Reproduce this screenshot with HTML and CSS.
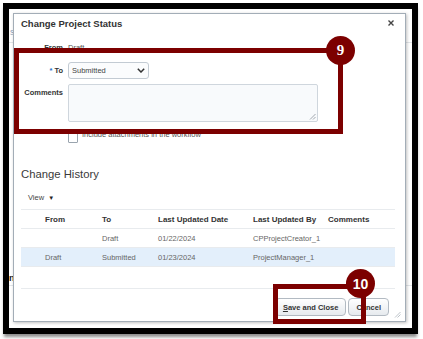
FILE: index.html
```html
<!DOCTYPE html>
<html lang="en">
<head>
    <meta charset="UTF-8">
    <meta name="viewport" content="width=device-width, initial-scale=1.0">
    <title>Change Project Status</title>
    <link rel="stylesheet" href="styles.css">
</head>
<body>
<div class="shot">
    <div class="frame">
        <div class="page">
            <div class="page-line"></div>
            <div class="page-mark">s</div>
            <div class="page-ns">ns</div>
            <div class="page-line page-line-low"></div>
        </div>

        <div class="dialog">
            <div class="dlg-head">
                <span class="dlg-title">Change Project Status</span>
                <svg class="dlg-close" width="6" height="6" viewBox="0 0 6 6">
                    <path d="M0.5 0.5 L5.5 5.5 M5.5 0.5 L0.5 5.5" stroke="#444" stroke-width="1.4"/>
                </svg>
            </div>

            <div class="form">
                <div class="row row-from">
                    <span class="lbl">From</span>
                    <span class="val">Draft</span>
                </div>
                <div class="row row-to">
                    <span class="lbl"><span class="req">*</span> To</span>
                    <div class="select">
                        <span>Submitted</span>
                        <svg width="8" height="5" viewBox="0 0 8 5">
                            <path d="M0.8 0.8 L4 4 L7.2 0.8" fill="none" stroke="#333" stroke-width="1.5"/>
                        </svg>
                    </div>
                </div>
                <div class="row row-comments">
                    <span class="lbl">Comments</span>
                    <div class="textarea">
                        <svg class="grip" width="7" height="7" viewBox="0 0 7 7">
                            <path d="M6.5 1 L1 6.5 M6.5 4 L4 6.5" stroke="#8a939c" stroke-width="0.8"/>
                        </svg>
                    </div>
                </div>
                <div class="row row-check">
                    <span class="lbl"></span>
                    <span class="check"></span>
                    <span class="check-text">Include attachments in the workflow</span>
                </div>
            </div>

            <h2 class="section">Change History</h2>
            <div class="toolbar">View <span class="caret">&#9660;</span></div>

            <div class="grid">
                <div class="grow ghead">
                    <span>From</span><span>To</span><span>Last Updated Date</span><span>Last Updated By</span><span>Comments</span>
                </div>
                <div class="grow">
                    <span></span><span>Draft</span><span>01/22/2024</span><span>CPProjectCreator_1</span><span></span>
                </div>
                <div class="grow selected">
                    <span>Draft</span><span>Submitted</span><span>01/23/2024</span><span>ProjectManager_1</span><span></span>
                </div>
            </div>

            <div class="footer">
                <button class="btn"><u>S</u>ave and Close</button>
                <button class="btn">Cancel</button>
            </div>

            <svg class="dlg-grip" width="7" height="7" viewBox="0 0 7 7">
                <path d="M6.5 1 L1 6.5 M6.5 3.5 L3.5 6.5" stroke="#b5bcc3" stroke-width="0.9"/>
            </svg>
        </div>
    </div>

    <div class="callout callout-9"><span class="badge badge-serif">9</span></div>
    <div class="callout callout-10"><span class="badge">10</span></div>
</div>
</body>
</html>
```

FILE: styles.css
```css
body {
    margin: 0;
    background: #fff;
    font-family: "Liberation Sans", Arial, sans-serif;
}

.shot {
    position: relative;
    width: 423px;
    height: 339px;
    padding: 3px 0 0 3px;
    box-sizing: border-box;
    overflow: hidden;
}

.frame {
    position: relative;
    width: 415px;
    height: 331px;
    box-sizing: border-box;
    border: 6px solid #000;
    background: #fff;
    box-shadow: 0 4px 3px -1px rgba(0, 0, 0, 0.45);
}

/* page behind the dialog */
.page {
    position: absolute;
    inset: 0;
    overflow: hidden;
}

.page-line {
    margin-top: 33px;
    height: 1px;
    background: #e2e5e8;
}

.page-line-low {
    margin-top: 2px;
}

.page-mark {
    margin-top: -16px;
    font-size: 9px;
    color: #8ea4bb;
    margin-left: 1px;
}

.page-ns {
    margin-top: 236px;
    font-size: 9px;
    line-height: 10px;
    font-weight: bold;
    color: #222;
}

/* dialog */
.dialog {
    position: absolute;
    left: 4px;
    top: 4px;
    width: 393px;
    height: 309px;
    box-sizing: border-box;
    padding: 0 10px 0 7px;
    border: 1px solid #a3adb7;
    background: #fff;
    box-shadow: 1px 1px 3px rgba(0, 0, 0, 0.25);
    color: #333;
}

.dlg-head {
    height: 18px;
    display: flex;
    align-items: center;
    justify-content: space-between;
    padding-right: 1px;
}

.dlg-title {
    font-size: 9.5px;
    font-weight: bold;
    color: #333;
}

.form {
    margin-top: 9px;
}

.row {
    display: flex;
    align-items: center;
    gap: 5px;
}

.lbl {
    width: 42px;
    flex: none;
    text-align: right;
    font-size: 7.5px;
    font-weight: bold;
    color: #333;
}

.req {
    color: #2a6fc9;
}

.row-from {
    height: 12px;
}

.val {
    font-size: 7.5px;
    color: #555;
}

.row-to {
    margin-top: 9px;
}

.select {
    width: 81px;
    height: 17px;
    box-sizing: border-box;
    border: 1px solid #c3cbd3;
    border-radius: 3px;
    background: #fbfcfd;
    padding: 0 3px 0 3px;
    display: flex;
    align-items: center;
    justify-content: space-between;
    font-size: 7.5px;
    color: #444;
}

.row-comments {
    margin-top: 5px;
    align-items: flex-start;
}

.row-comments .lbl {
    margin-top: 4px;
}

.textarea {
    position: relative;
    width: 250px;
    height: 38px;
    box-sizing: border-box;
    border: 1px solid #cfd6dd;
    border-radius: 2px;
    background: #f8fafc;
}

.grip {
    position: absolute;
    right: 1px;
    bottom: 1px;
}

.row-check {
    margin-top: 11px;
    gap: 4px;
    align-items: flex-start;
}

.row-check .lbl {
    margin-right: 1px;
}

.check {
    width: 10px;
    height: 10px;
    box-sizing: border-box;
    border: 1px solid #9aa4ae;
    border-radius: 1px;
    background: #fff;
}

.check-text {
    margin-top: -3px;
    font-size: 7.5px;
    line-height: 10px;
    color: #555;
}

.section {
    margin: 24px 0 0;
    font-size: 11.3px;
    font-weight: normal;
    line-height: 14px;
    color: #3a3a3a;
}

.toolbar {
    margin-top: 12px;
    padding-left: 7px;
    font-size: 7.5px;
    line-height: 10px;
    color: #444;
}

.caret {
    font-size: 6px;
    margin-left: 2px;
    color: #222;
}

/* history table */
.grid {
    margin-top: 6px;
    border-bottom: 1px solid #e8ebee;
}

.grow {
    display: grid;
    grid-template-columns: 81px 56px 95px 75px 1fr;
    height: 19px;
    box-sizing: border-box;
    border-top: 1px solid #e8ebee;
    align-items: center;
    font-size: 7.5px;
    color: #666;
}

.grow span:first-child {
    padding-left: 24px;
}

.ghead {
    font-size: 8px;
    font-weight: bold;
    color: #333;
}

.selected {
    background: #e3effb;
}

.footer {
    margin-top: 21px;
    padding: 9px 6px 0 0;
    border-top: 1px solid #e8ebee;
    display: flex;
    justify-content: flex-end;
    gap: 2px;
}

.btn {
    height: 18px;
    padding: 0 7px;
    border: 1px solid #b2bac2;
    border-radius: 4px;
    background: linear-gradient(#ffffff, #e6eaee);
    font-family: "Liberation Sans", Arial, sans-serif;
    font-size: 7.5px;
    font-weight: bold;
    color: #333;
}

.dlg-grip {
    position: absolute;
    right: 4px;
    bottom: 3px;
}

/* annotation callouts */
.callout {
    position: absolute;
    box-sizing: border-box;
    border: 5px solid #7c0000;
}

.callout-9 {
    left: 14px;
    top: 48px;
    width: 329px;
    height: 86px;
}

.callout-10 {
    left: 273px;
    top: 284px;
    width: 93px;
    height: 40px;
}

.badge {
    position: absolute;
    width: 29px;
    height: 29px;
    border-radius: 50%;
    background: #7c0000;
    color: #fff;
    display: flex;
    align-items: center;
    justify-content: center;
    font-size: 14px;
    font-weight: bold;
}

.badge-serif {
    font-family: "Liberation Serif", "Times New Roman", serif;
    font-size: 15px;
}

.callout-9 .badge {
    left: 307px;
    top: -17px;
}

.callout-10 .badge {
    left: 68px;
    top: -20px;
}
```
